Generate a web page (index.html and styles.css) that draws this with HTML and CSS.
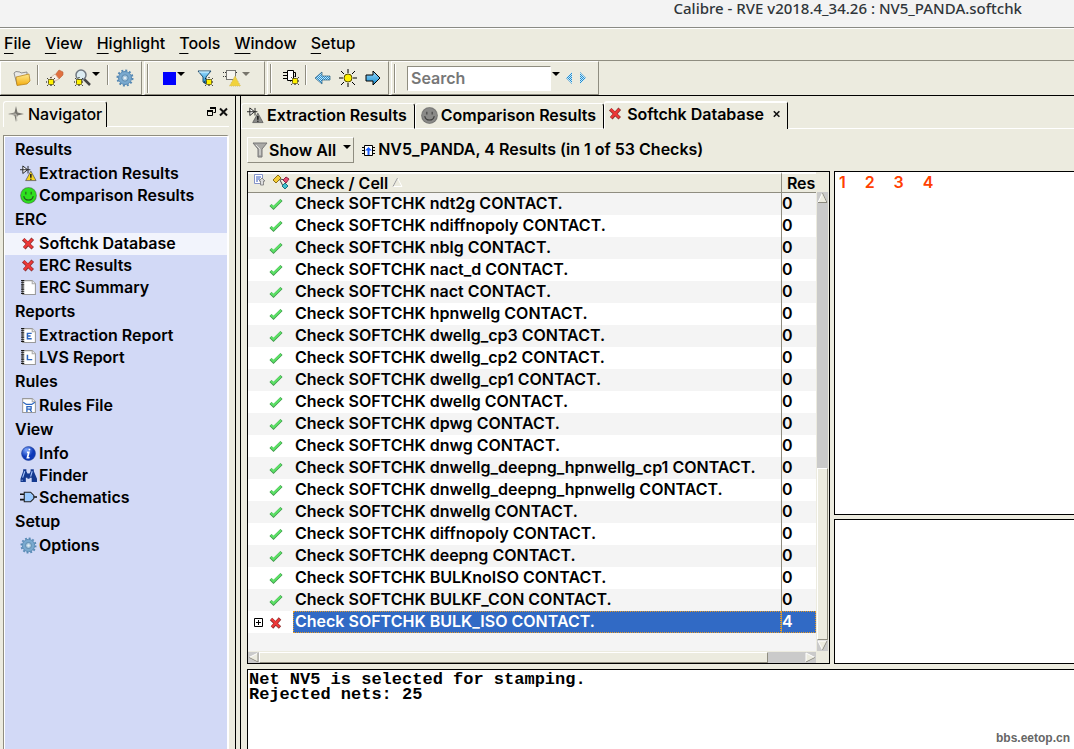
FILE: index.html
```
<!DOCTYPE html>
<html lang="en">
<head>
    <meta charset="UTF-8">
    <meta name="viewport" content="width=device-width, initial-scale=1.0">
    <title>Calibre - RVE v2018.4_34.26 : NV5_PANDA.softchk</title>
    <link rel="stylesheet" href="styles.css">
</head>
<body>
    <!-- shared icons -->
    <svg class="sprite" aria-hidden="true">
        <defs>
            <linearGradient id="g-folder" x1="0" y1="0" x2="0" y2="1"><stop offset="0" stop-color="#ffe98a"/><stop offset="1" stop-color="#f2ac10"/></linearGradient>
            <linearGradient id="g-blue" x1="0" y1="0" x2="0" y2="1"><stop offset="0" stop-color="#9ddcff"/><stop offset="1" stop-color="#118bd0"/></linearGradient>
            <radialGradient id="g-info" cx=".35" cy=".25"><stop offset="0" stop-color="#7fa8ff"/><stop offset="1" stop-color="#0c38b8"/></radialGradient>
            <pattern id="p-dim" width="2" height="2" patternUnits="userSpaceOnUse"><path d="M0 0h1v1H0zM1 1h1v1H1z" fill="#2688d0"/><path d="M1 0h1v1H1zM0 1h1v1H0z" fill="#c4ecf8"/></pattern>
        </defs>
        <symbol id="i-spark" viewBox="0 0 10 10">
            <path d="M5 0v10M0 5h10M1 1l8 8M9 1l-8 8" stroke="#000" stroke-dasharray="1 1"/>
            <rect x="2.500" y="2.500" width="5" height="5" rx="1" fill="#fff200" stroke="#5a5000" stroke-width=".8"/>
        </symbol>
        <symbol id="i-folder" viewBox="0 0 18 18">
            <path d="M1 4l2-1.500 4 .5 1 1 6-1v10L4 15.500z" fill="#e9e9e6" stroke="#777" stroke-width=".8"/>
            <path d="M3 8l13-3 1 7-3 3-10 1.500z" fill="url(#g-folder)" stroke="#b17a10" stroke-width=".7"/>
        </symbol>
        <symbol id="i-eraser" viewBox="0 0 18 18">
            <path d="M9 6l4-5 4 2v3l-4 4z" fill="#e07040" stroke="#b86038" stroke-width=".6"/>
            <path d="M4 9l5-4 4 5-4 2z" fill="#f7efe8" stroke="#c9a58d" stroke-width=".7"/>
            <use href="#i-spark" x="0" y="8" width="10" height="10"/>
        </symbol>
        <symbol id="i-zoom" viewBox="0 0 18 18">
            <path d="M11 10l6 6" stroke="#444" stroke-width="2.500"/>
            <circle cx="8" cy="6" r="5" fill="#dcecf2" stroke="#707880" stroke-width="1.500"/>
            <use href="#i-spark" x="1" y="8" width="10" height="10"/>
        </symbol>
        <symbol id="i-gear" viewBox="0 0 18 18">
            <circle cx="9" cy="9" r="7.500" fill="none" stroke="#5689b4" stroke-width="2" stroke-dasharray="2 1.927"/>
            <circle cx="9" cy="9" r="6.500" fill="#79a9cf" stroke="#588ab4"/>
            <circle cx="9" cy="9" r="3.200" fill="#a9c9e0" stroke="#5b89ad"/>
            <circle cx="9" cy="9" r="1.300" fill="#e3edf2"/>
        </symbol>
        <symbol id="i-filter" viewBox="0 0 18 18">
            <path d="M2 2h13l-5 6v7l-3-2V8z" fill="url(#g-blue)" stroke="#234e70"/>
            <path d="M3 3h10" stroke="#d5f2ff"/>
            <use href="#i-spark" x="8" y="8" width="10" height="10"/>
        </symbol>
        <symbol id="i-warnbox" viewBox="0 0 18 18">
            <rect x="3.500" y="1.500" width="9" height="9" fill="#fff" fill-opacity=".5" stroke="#000" stroke-dasharray="1 1"/>
            <path d="M0 3.500h3M0 7.500h3M13 3.500h2" stroke="#333" stroke-dasharray="1 1"/>
            <path d="M12 7l5.500 10h-11z" fill="#f1d23a" stroke="#d4bd65" stroke-dasharray="1 1"/>
        </symbol>
        <symbol id="i-chip" viewBox="0 0 18 18">
            <path d="M1 3.500h4M1 6.500h4M1 9.500h4M11 3.500h2.500V8" fill="none" stroke="#000"/>
            <path d="M5.500 1.500h6v10h-6z" fill="#fff" stroke="#000"/>
            <use href="#i-spark" x="8" y="7" width="10" height="10"/>
        </symbol>
        <symbol id="i-left" viewBox="0 0 18 18"><path d="M1 9l7-6v4h8v4H8v4z" fill="url(#p-dim)" stroke="#285f80" stroke-width=".7"/></symbol>
        <symbol id="i-right" viewBox="0 0 18 18"><path d="M16 9L9 2v4H2v6h7v4z" fill="url(#g-blue)" stroke="#000"/></symbol>
        <symbol id="i-sun" viewBox="0 0 18 18">
            <path d="M9 0v4M9 14v4M0 9h4M14 9h4M2 2l3 3M13 13l3 3M16 2l-3 3M5 13l-3 3" stroke="#000"/>
            <circle cx="9" cy="9" r="4" fill="#fff200" stroke="#5a5000"/>
        </symbol>
        <symbol id="i-cross" viewBox="0 0 16 16">
            <path d="M3 4l9 8.500M12 3.500L4 12.500" stroke="#8e3030" stroke-width="3.400"/>
            <path d="M3.500 4l8 8M11.500 4l-7.500 8" stroke="#ee3737" stroke-width="2.200"/>
        </symbol>
        <symbol id="i-check" viewBox="0 0 16 16">
            <path d="M2.500 8l3 3L13.500 3" fill="none" stroke="#3f9a4a" stroke-width="3"/>
            <path d="M3 8l2.500 2.300L13 3.200" fill="none" stroke="#5ce266" stroke-width="2"/>
        </symbol>
        <symbol id="i-extract" viewBox="0 0 18 18">
            <path d="M0 5h11M3 1v8l5-4zM8.500 1v8" fill="#fff" stroke="#222"/>
            <path d="M11.500 6.500l5.500 10H6z" fill="currentColor" stroke="#555" stroke-width=".8"/>
            <path d="M11.500 9.500v4M11.500 14.500v1.200" stroke="#111" stroke-width="1.500"/>
        </symbol>
        <symbol id="i-smile" viewBox="0 0 16 16">
            <circle cx="8" cy="8" r="7.500" fill="currentColor" stroke="#444" stroke-opacity=".45"/>
            <path d="M5.500 4.500v2.500M10.500 4.500v2.500M3.500 8.500c1 5 8 5 9 0" fill="none" stroke="#222" stroke-opacity=".75"/>
        </symbol>
        <symbol id="i-page" viewBox="0 0 16 16">
            <path d="M2.500 1.500h9l3 3v10h-12z" fill="#fff" stroke="#999"/>
            <path d="M11.500 1.500v3h3" fill="#eee" stroke="#aaa"/>
            <path d="M2.500 1v14" stroke="#111" stroke-width="3" stroke-dasharray="1 1"/>
        </symbol>
        <symbol id="i-page-e" viewBox="0 0 16 16">
            <use href="#i-page"/><path d="M11 6H7v5h4M7 8.500h3" fill="none" stroke="#2b65c0" stroke-width="1.400"/>
        </symbol>
        <symbol id="i-page-l" viewBox="0 0 16 16">
            <use href="#i-page"/><path d="M7 5.500V10h4.500" fill="none" stroke="#2b65c0" stroke-width="1.400"/>
        </symbol>
        <symbol id="i-rules" viewBox="0 0 16 16">
            <path d="M2.500 1.500h9l3 3v10h-12z" fill="#fff" stroke="#999"/><path d="M11.500 1.500v3h3" fill="#eee" stroke="#aaa"/>
            <path d="M3 5l3 2h5l3-2M6.500 14V9h4v2.500h-4M9 11.500l2 2.500" fill="none" stroke="#2b65c0" stroke-width="1.200"/>
        </symbol>
        <symbol id="i-info" viewBox="0 0 16 16">
            <circle cx="8" cy="8" r="6.500" fill="url(#g-info)" stroke="#1c3c94" stroke-width=".6"/>
            <path d="M9 3.500l-.3 1.500M6.500 7h1.800L7 12h2" fill="none" stroke="#fff" stroke-width="1.600"/>
        </symbol>
        <symbol id="i-finder" viewBox="0 0 16 16">
            <path d="M3 2h3v2l1 2h2l1-2V2h3v2l3 7v3h-5v-4H9v1H7v-1H5.500v4H.5v-3L3 4z" fill="#14398f"/>
            <path d="M4.500 4l-2 6M11.500 4l-1.500 5M2 12v1" stroke="#a9c7ff"/>
        </symbol>
        <symbol id="i-gate" viewBox="0 0 16 16">
            <path d="M0 5h4M0 10h4M13 7.500h3" stroke="#111" stroke-width="1.500"/>
            <path d="M4 3h6l3 3v3l-3 3H4z" fill="#9bcaff" stroke="#222"/>
        </symbol>
        <symbol id="i-compass" viewBox="0 0 18 18">
            <path d="M9 1l1.500 6.500L17 9l-6.500 1.500L9 17l-1.500-6.500L1 9l6.500-1.500z" fill="#77756f"/><path d="M9 9l1 7M9 9l-7 .5" stroke="#c8c6bd"/>
        </symbol>
        <symbol id="i-funnel" viewBox="0 0 16 18">
            <path d="M1 2h14l-5 6v8H6V8z" fill="#a9a9a6" stroke="#777"/><path d="M4 4l4 4v6" fill="none" stroke="#e4e4e0"/>
        </symbol>
        <symbol id="i-cell" viewBox="0 0 13 13">
            <path d="M0 3.500h13M0 6.500h13M0 9.500h13" stroke="#000"/>
            <path d="M2.500 1.500h8v10h-8z" fill="#fff" stroke="#000"/>
            <path d="M6.500 3L10 6.500H7.500V11h-2V6.500H3z" fill="#1a5cff"/>
        </symbol>
        <symbol id="i-list" viewBox="0 0 12 12">
            <path d="M.5.5h8v9h-8z" fill="#fff" stroke="#8594c8"/><path d="M2 3h5M2 5h4M2 7h2" stroke="#3256bd"/>
            <path d="M5 7l3-3 3 3H9.500v4h-3V7z" fill="#ddd" stroke="#777" stroke-width=".8"/>
        </symbol>
        <symbol id="i-tree" viewBox="0 0 18 16">
            <path d="M8 5l5 1M8 6l3 6" stroke="#444"/>
            <path d="M1 6l5-5 3 3-5 5z" fill="#f5cf38" stroke="#8d6c11"/>
            <path d="M11 6l3-3 3 2-3 4z" fill="#e74a70" stroke="#8e2443"/>
            <path d="M10 12l3-3 3 3-3 3z" fill="#3fc0cd" stroke="#18727e"/>
        </symbol>
        <symbol id="i-x" viewBox="0 0 10 10"><path d="M1 1.500l7 7M8 1.500l-7 7" stroke="#111" stroke-width="2"/></symbol>
    </svg>

    <header class="titlebar">Calibre - RVE v2018.4_34.26 : NV5_PANDA.softchk</header>

    <nav class="menubar">
        <button><u>F</u>ile</button>
        <button><u>V</u>iew</button>
        <button><u>H</u>ighlight</button>
        <button><u>T</u>ools</button>
        <button><u>W</u>indow</button>
        <button><u>S</u>etup</button>
    </nav>

    <div class="toolbar">
        <div class="tool-group">
            <button class="tool" aria-label="Open"><svg class="icon"><use href="#i-folder"/></svg></button>
            <span class="sep"></span>
            <button class="tool" aria-label="Clear highlights"><svg class="icon"><use href="#i-eraser"/></svg></button>
            <button class="tool tool-drop" aria-label="Zoom to highlight"><svg class="icon"><use href="#i-zoom"/></svg><span class="caret"></span></button>
            <span class="sep"></span>
            <button class="tool" aria-label="Options"><svg class="icon"><use href="#i-gear"/></svg></button>
        </div>
        <div class="tool-group tool-group-filter">
            <span class="handle"></span>
            <button class="tool tool-drop" aria-label="Highlight color"><span class="swatch"></span><span class="caret"></span></button>
            <button class="tool" aria-label="Filter"><svg class="icon"><use href="#i-filter"/></svg></button>
            <button class="tool tool-drop" aria-label="Waive"><svg class="icon"><use href="#i-warnbox"/></svg><span class="caret caret-dim"></span></button>
        </div>
        <div class="tool-group tool-group-step">
            <span class="handle"></span>
            <button class="tool" aria-label="Highlight device"><svg class="icon"><use href="#i-chip"/></svg></button>
            <span class="sep"></span>
            <button class="tool" aria-label="Previous"><svg class="icon"><use href="#i-left"/></svg></button>
            <button class="tool" aria-label="Highlight"><svg class="icon"><use href="#i-sun"/></svg></button>
            <button class="tool" aria-label="Next"><svg class="icon"><use href="#i-right"/></svg></button>
        </div>
        <div class="tool-group tool-group-search">
            <span class="handle"></span>
            <input class="search" type="text" placeholder="Search" aria-label="Search">
            <button class="search-drop" aria-label="Search history"><span class="caret"></span></button>
            <button class="search-step" aria-label="Find previous"><svg width="6" height="12"><path d="M6 0v12L0 6z" fill="url(#p-dim)"/></svg></button>
            <button class="search-step" aria-label="Find next"><svg width="6" height="12"><path d="M0 0v12l6-6z" fill="url(#p-dim)"/></svg></button>
        </div>
    </div>

    <div class="workspace">
        <aside class="navigator">
            <div class="nav-head">
                <h2 class="nav-title"><svg class="icon"><use href="#i-compass"/></svg>Navigator</h2>
                <div class="nav-buttons">
                    <button aria-label="Undock"><svg width="9" height="10"><path d="M3.500 1.500h5v4h-2M.5 4.500h5v4h-5z" fill="none" stroke="#000"/><path d="M3 1h6M0 4h6" stroke="#000" stroke-width="2"/></svg></button>
                    <button aria-label="Close"><svg width="10" height="10"><use href="#i-x"/></svg></button>
                </div>
            </div>
            <nav class="nav-list">
                <h3>Results</h3>
                <a href="#"><svg class="icon warn"><use href="#i-extract"/></svg>Extraction Results</a>
                <a href="#"><svg class="icon good"><use href="#i-smile"/></svg>Comparison Results</a>
                <h3>ERC</h3>
                <a href="#" class="active"><svg class="icon"><use href="#i-cross"/></svg>Softchk Database</a>
                <a href="#"><svg class="icon"><use href="#i-cross"/></svg>ERC Results</a>
                <a href="#"><svg class="icon"><use href="#i-page"/></svg>ERC Summary</a>
                <h3>Reports</h3>
                <a href="#"><svg class="icon"><use href="#i-page-e"/></svg>Extraction Report</a>
                <a href="#"><svg class="icon"><use href="#i-page-l"/></svg>LVS Report</a>
                <h3>Rules</h3>
                <a href="#"><svg class="icon"><use href="#i-rules"/></svg>Rules File</a>
                <h3>View</h3>
                <a href="#"><svg class="icon"><use href="#i-info"/></svg>Info</a>
                <a href="#"><svg class="icon"><use href="#i-finder"/></svg>Finder</a>
                <a href="#"><svg class="icon"><use href="#i-gate"/></svg>Schematics</a>
                <h3>Setup</h3>
                <a href="#"><svg class="icon"><use href="#i-gear"/></svg>Options</a>
            </nav>
        </aside>

        <main class="main">
            <div class="tabs">
                <button class="tab"><svg class="icon dim"><use href="#i-extract"/></svg>Extraction Results</button>
                <button class="tab"><svg class="icon dim"><use href="#i-smile"/></svg>Comparison Results</button>
                <button class="tab tab-active"><svg class="icon"><use href="#i-cross"/></svg>Softchk Database<svg class="tab-close"><use href="#i-x"/></svg></button>
                <span class="tabs-rest"></span>
            </div>

            <div class="summary">
                <button class="show-all"><svg class="icon"><use href="#i-funnel"/></svg>Show All<span class="caret"></span></button>
                <svg class="cell-icon"><use href="#i-cell"/></svg>
                <span>NV5_PANDA, 4 Results (in 1 of 53 Checks)</span>
            </div>

            <div class="panes">
                <section class="results">
                    <div class="results-view">
                        <table class="checks">
                            <colgroup><col class="col-icon"><col><col class="col-count"></colgroup>
                            <thead>
                                <tr>
                                    <th class="head-icons"><svg class="icon-list"><use href="#i-list"/></svg><svg class="icon-tree"><use href="#i-tree"/></svg></th>
                                    <th>Check / Cell <svg class="sort"><path d="M1 9.500h9L5.500 1z" fill="none" stroke="#fff"/><path d="M1 9.500L5.500 1" stroke="#999"/></svg></th>
                                    <th class="count">Res</th>
                                </tr>
                            </thead>
                            <tbody>
                                <tr><td><svg class="icon"><use href="#i-check"/></svg></td><td>Check SOFTCHK ndt2g CONTACT.</td><td class="count">0</td></tr>
                                <tr><td><svg class="icon"><use href="#i-check"/></svg></td><td>Check SOFTCHK ndiffnopoly CONTACT.</td><td class="count">0</td></tr>
                                <tr><td><svg class="icon"><use href="#i-check"/></svg></td><td>Check SOFTCHK nblg CONTACT.</td><td class="count">0</td></tr>
                                <tr><td><svg class="icon"><use href="#i-check"/></svg></td><td>Check SOFTCHK nact_d CONTACT.</td><td class="count">0</td></tr>
                                <tr><td><svg class="icon"><use href="#i-check"/></svg></td><td>Check SOFTCHK nact CONTACT.</td><td class="count">0</td></tr>
                                <tr><td><svg class="icon"><use href="#i-check"/></svg></td><td>Check SOFTCHK hpnwellg CONTACT.</td><td class="count">0</td></tr>
                                <tr><td><svg class="icon"><use href="#i-check"/></svg></td><td>Check SOFTCHK dwellg_cp3 CONTACT.</td><td class="count">0</td></tr>
                                <tr><td><svg class="icon"><use href="#i-check"/></svg></td><td>Check SOFTCHK dwellg_cp2 CONTACT.</td><td class="count">0</td></tr>
                                <tr><td><svg class="icon"><use href="#i-check"/></svg></td><td>Check SOFTCHK dwellg_cp1 CONTACT.</td><td class="count">0</td></tr>
                                <tr><td><svg class="icon"><use href="#i-check"/></svg></td><td>Check SOFTCHK dwellg CONTACT.</td><td class="count">0</td></tr>
                                <tr><td><svg class="icon"><use href="#i-check"/></svg></td><td>Check SOFTCHK dpwg CONTACT.</td><td class="count">0</td></tr>
                                <tr><td><svg class="icon"><use href="#i-check"/></svg></td><td>Check SOFTCHK dnwg CONTACT.</td><td class="count">0</td></tr>
                                <tr><td><svg class="icon"><use href="#i-check"/></svg></td><td>Check SOFTCHK dnwellg_deepng_hpnwellg_cp1 CONTACT.</td><td class="count">0</td></tr>
                                <tr><td><svg class="icon"><use href="#i-check"/></svg></td><td>Check SOFTCHK dnwellg_deepng_hpnwellg CONTACT.</td><td class="count">0</td></tr>
                                <tr><td><svg class="icon"><use href="#i-check"/></svg></td><td>Check SOFTCHK dnwellg CONTACT.</td><td class="count">0</td></tr>
                                <tr><td><svg class="icon"><use href="#i-check"/></svg></td><td>Check SOFTCHK diffnopoly CONTACT.</td><td class="count">0</td></tr>
                                <tr><td><svg class="icon"><use href="#i-check"/></svg></td><td>Check SOFTCHK deepng CONTACT.</td><td class="count">0</td></tr>
                                <tr><td><svg class="icon"><use href="#i-check"/></svg></td><td>Check SOFTCHK BULKnoISO CONTACT.</td><td class="count">0</td></tr>
                                <tr><td><svg class="icon"><use href="#i-check"/></svg></td><td>Check SOFTCHK BULKF_CON CONTACT.</td><td class="count">0</td></tr>
                                <tr class="selected"><td><svg class="expand"><path d="M.5.5h8v8h-8zM2 4.500h5M4.500 2v5" fill="#fff" stroke="#000"/></svg><svg class="icon"><use href="#i-cross"/></svg></td><td>Check SOFTCHK BULK_ISO CONTACT.</td><td class="count">4</td></tr>
                            </tbody>
                        </table>
                    </div>
                    <div class="vscroll">
                        <svg class="arrow"><path d="M1 10.500L5.500 1 10 10.500z" fill="#ecebdf" stroke="#fff"/><path d="M1 10.500h9L5.500 1" fill="none" stroke="#8a887c"/></svg>
                        <span class="track"></span>
                        <span class="thumb"></span>
                        <svg class="arrow"><path d="M1 1h9L5.500 10z" fill="#ecebdf" stroke="#fff"/><path d="M10 1L5.500 10" stroke="#8a887c"/></svg>
                    </div>
                    <div class="hscroll">
                        <svg class="arrow"><path d="M10 1v9L1 5.500z" fill="#ecebdf" stroke="#fff"/><path d="M10 1v9L1 5.500" fill="none" stroke="#8a887c"/></svg>
                        <span class="thumb"></span>
                        <span class="track"></span>
                        <svg class="arrow"><path d="M1 1v9l9-4.500z" fill="#ecebdf" stroke="#fff"/><path d="M1 10l9-4.500" stroke="#8a887c"/></svg>
                    </div>
                </section>
                <div class="details">
                    <section class="ids">
                        <a href="#">1</a>
                        <a href="#">2</a>
                        <a href="#">3</a>
                        <a href="#">4</a>
                    </section>
                    <section class="properties"></section>
                </div>
            </div>

            <section class="console">
                <pre>Net NV5 is selected for stamping.
Rejected nets: 25</pre>
                <span class="watermark">bbs.eetop.cn</span>
            </section>
        </main>
    </div>
</body>
</html>
```
FILE: styles.css
```
* {
    box-sizing: border-box;
}
body {
    margin: 0;
    height: 100vh;
    display: flex;
    flex-direction: column;
    overflow: hidden;
    background: #ecebdf;
    color: #000;
    font: 600 16px/20px Inter, "Liberation Sans", sans-serif;
    white-space: nowrap;
}
button {
    font: inherit;
    color: inherit;
    background: none;
    border: 0;
    padding: 0;
}
a {
    color: inherit;
    text-decoration: none;
}
h2, h3 {
    margin: 0;
    font: inherit;
}
svg {
    flex: none;
}
.sprite {
    position: absolute;
    width: 0;
    height: 0;
}
.icon {
    width: 18px;
    height: 18px;
}
.caret {
    border: 4px solid transparent;
    border-top-color: #000;
    border-bottom: 0;
}
.caret-dim {
    border-top-color: #77756c;
}

/* title and menu */
.titlebar {
    height: 28px;
    padding-right: 52px;
    background: #f3f3f3;
    border-bottom: 1px solid #8a8a84;
    color: #30363a;
    font: 500 15px/17px "Noto Sans", "Open Sans", sans-serif;
    text-align: right;
}
.menubar {
    display: flex;
    gap: 14px;
    height: 33px;
    padding: 0 4px 3px;
    border-top: 1px solid #fff;
    border-bottom: 1px solid #8f8d80;
    font-weight: 500;
}
.menubar u {
    text-underline-offset: 4px;
    text-decoration-thickness: 1px;
}

/* toolbar */
.toolbar {
    display: flex;
    height: 35px;
    border-bottom: 1px solid #000;
}
.tool-group {
    display: flex;
    align-items: center;
    padding-left: 8px;
    border: 1px solid #fff;
    border-right-color: #8f8d80;
    border-bottom-color: #8f8d80;
    margin-right: 2px;
}
.tool-group:first-child {
    width: 142px;
}
.tool-group-filter {
    width: 121px;
    padding-left: 2px;
}
.tool-group-step {
    width: 122px;
    padding-left: 2px;
}
.tool-group-search {
    padding: 0 12px 0 2px;
}
.tool {
    display: flex;
    flex: none;
    align-items: center;
    justify-content: center;
    width: 26px;
    height: 28px;
}
.tool-drop {
    width: 37px;
    gap: 1px;
}
.tool-group-step .tool {
    width: 25px;
}
.tool-drop .caret,
.search-drop .caret {
    margin-bottom: 8px;
}
.sep,
.handle {
    flex: none;
    width: 2px;
    border-left: 1px solid #8f8d80;
    border-right: 1px solid #fff;
}
.sep {
    height: 20px;
    margin: 0 3px 6px 2px;
}
.handle {
    height: 29px;
    margin-right: 6px;
}
.tool-group-search .handle {
    margin-right: 11px;
}
.swatch {
    width: 13px;
    height: 13px;
    background: #00f;
}
.search {
    width: 144px;
    height: 25px;
    padding: 0 3px;
    border: 1px solid #8f8d80;
    border-right-color: #fff;
    border-bottom-color: #fff;
    background: #fff;
    font: inherit;
}
.search::placeholder {
    color: #777;
    opacity: 1;
}
.search-drop,
.search-step {
    display: flex;
    align-items: center;
    justify-content: center;
}
.search-drop {
    margin: 0 6px 0 1px;
}
.search-step + .search-step {
    margin-left: 8px;
}

/* navigator */
.workspace {
    display: flex;
    flex: 1;
    min-height: 0;
}
.navigator {
    display: flex;
    flex-direction: column;
    width: 236px;
    flex: none;
    padding: 5px 6px 0 3px;
    border-right: 1px solid #000;
}
.nav-head {
    display: flex;
    justify-content: space-between;
    height: 34px;
}
.nav-title {
    display: flex;
    align-items: center;
    gap: 3px;
    height: 26px;
    padding: 0 4px 2px 3px;
    border-top: 1px solid #fff;
    border-left: 1px solid #fff;
    border-right: 1px solid #000;
    border-radius: 3px 3px 0 0;
    font-weight: 500;
}
.nav-buttons {
    display: flex;
    flex: 1;
    justify-content: flex-end;
    gap: 3px;
    height: 26px;
    padding-bottom: 6px;
    border-bottom: 1px solid #fff;
}
.nav-list {
    flex: 1;
    background: #d2d9f6;
    border: 1px solid #8f8d80;
    border-right: 2px solid #fff;
    border-bottom: 0;
    box-shadow: inset 1px 1px #fff;
    padding: 1px 0 0 1px;
}
.nav-list h3 {
    padding: 0 0 2px 10px;
    line-height: 24px;
}
.nav-list a {
    display: flex;
    align-items: center;
    height: 22px;
    padding: 0 0 2px 15px;
    gap: 2px;
}
.nav-list .icon,
.tab .icon {
    width: 17px;
    height: 17px;
}
.nav-list .active {
    background: #f2f4fc;
}
.warn {
    color: #f7d51d;
}
.good {
    color: #2ee01f;
}
.dim {
    color: #8a8a88;
}

/* main area */
.main {
    display: flex;
    flex-direction: column;
    flex: 1;
    min-width: 0;
    margin-left: 4px;
    border-left: 1px solid #000;
    padding-top: 5px;
}
.tabs {
    display: flex;
    align-items: flex-end;
    height: 28px;
}
.tab {
    display: flex;
    align-items: center;
    gap: 3px;
    height: 26px;
    padding: 0 7px 2px 5px;
    border: 1px solid #fff;
    border-right-color: #000;
    border-radius: 3px 3px 0 0;
}
.tab-active {
    height: 28px;
    padding: 0 6px 5px 2px;
    border-top-width: 2px;
    border-bottom: 0;
}
.tab-close {
    width: 8px;
    height: 8px;
    margin-left: 6px;
}
.tabs-rest {
    flex: 1;
    border-bottom: 1px solid #fff;
}
.summary {
    display: flex;
    align-items: center;
    height: 42px;
    padding-left: 6px;
}
.summary > span {
    padding-bottom: 2px;
}
.show-all {
    display: flex;
    align-items: center;
    height: 26px;
    padding: 0 2px 0 3px;
    border: 1px solid #fff;
    border-right-color: #8f8d80;
    border-bottom-color: #8f8d80;
}
.show-all .caret {
    margin: 0 0 6px 7px;
}
.cell-icon {
    width: 13px;
    height: 13px;
    margin: 0 3px 0 8px;
}
.panes {
    display: flex;
    flex: 1;
    min-height: 0;
    gap: 4px;
    padding-left: 6px;
}
.results {
    display: grid;
    grid-template: 1fr 12px / 1fr 13px;
    flex: 583;
    min-width: 0;
    border: 1px solid #000;
}
.results-view {
    overflow: hidden;
    background: #f4f4f4;
}
.checks {
    width: 100%;
    table-layout: fixed;
    border-spacing: 0;
    text-align: left;
}
.col-icon {
    width: 45px;
}
.col-count {
    width: 35px;
}
.checks th {
    height: 21px;
    padding: 0 0 0 2px;
    background: #ecebdf;
    border-top: 2px solid #fff;
    border-bottom: 1px solid #8f8d80;
    font-weight: 600;
    line-height: 18px;
}
.checks td {
    height: 22px;
    padding: 0 0 2px 2px;
    line-height: 20px;
    background: #fff;
}
.checks tr:nth-child(odd) td {
    background: #f4f4f4;
}
.checks tr.selected td {
    background: #fff;
}
.checks .count {
    padding-left: 0;
    border-left: 1px solid #8f8d80;
}
.checks th.count {
    padding-left: 5px;
}
.checks svg {
    vertical-align: middle;
}
.checks th svg {
    vertical-align: top;
}
.checks td .icon {
    width: 16px;
    height: 16px;
    margin-left: 18px;
}
.checks .expand {
    width: 9px;
    height: 9px;
    margin-left: 4px;
}
.checks .expand + .icon {
    margin-left: 5px;
}
.checks .head-icons {
    padding-left: 6px;
}
.icon-list {
    width: 12px;
    height: 12px;
}
.icon-tree {
    width: 18px;
    height: 16px;
    margin-left: 6px;
}
.sort {
    width: 11px;
    height: 16px;
    padding-top: 3px;
}
.checks tr.selected td + td {
    background: #316ac5;
    color: #fff;
    outline: 1px dotted #e59a25;
    outline-offset: -1px;
}

/* scrollbars */
.vscroll,
.hscroll {
    display: flex;
}
.vscroll {
    flex-direction: column;
    padding: 20px 1px 0;
}
.hscroll {
    padding-top: 1px;
}
.arrow {
    width: 11px;
    height: 11px;
    background: #cacaca;
}
.track {
    background: #cacaca;
}
.thumb {
    background: #ecebdf;
    border: 1px solid #fff;
    border-right-color: #8f8d80;
    border-bottom-color: #8f8d80;
}
.vscroll .track {
    flex: 267;
}
.vscroll .thumb {
    flex: 171;
}
.hscroll .track {
    flex: 37;
}
.hscroll .thumb {
    flex: 510;
}

/* details */
.details {
    display: flex;
    flex-direction: column;
    flex: 241;
    min-width: 0;
    gap: 4px;
}
.ids,
.properties {
    background: #fff;
    border: 1px solid #000;
    border-right: 0;
}
.ids {
    display: flex;
    align-items: flex-start;
    gap: 19px;
    flex: 345;
    padding-left: 4px;
    color: #ff4000;
}
.properties {
    flex: 144;
}
.console {
    display: flex;
    justify-content: space-between;
    height: 80px;
    margin: 5px 0 0 6px;
    padding: 2px 4px 0 1px;
    background: #fff;
    border-top: 1px solid #000;
    border-left: 1px solid #000;
}
.console pre {
    margin: 0;
    font: 700 17px/15px "Liberation Mono", monospace;
}
.watermark {
    align-self: flex-end;
    color: #666;
    font: 700 12px/22px "Liberation Sans", sans-serif;
}
```
